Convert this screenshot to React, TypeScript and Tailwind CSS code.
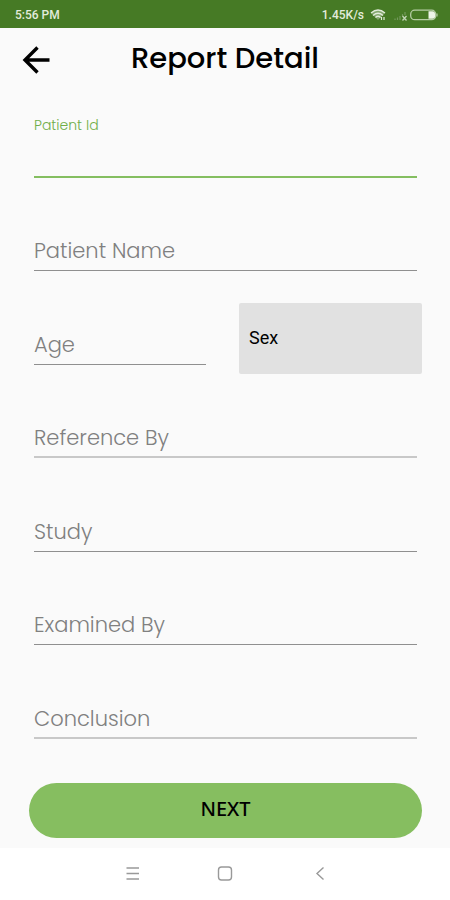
import React from "react";

interface FieldProps {
  id: string;
  label: string;
  lineClass?: string;
}

const Field = ({
  id,
  label,
  lineClass = "border-b border-[#8f8f8f]",
}: FieldProps) => {
  return (
    <div className="relative flex flex-col justify-end">
      <input
        id={id}
        type="text"
        placeholder=" "
        className={`peer h-10 w-full bg-transparent text-xl text-gray-800 outline-none ${lineClass}`}
      />
      <label
        htmlFor={id}
        className="pointer-events-none absolute bottom-1 left-0 text-[21px] leading-8 font-light text-[#808080] peer-focus:bottom-10 peer-focus:text-sm peer-focus:text-[#84be60] peer-[:not(:placeholder-shown)]:bottom-10 peer-[:not(:placeholder-shown)]:text-sm"
      >
        {label}
      </label>
    </div>
  );
};

const StatusBar = () => {
  return (
    <div className="flex h-7 items-center justify-between bg-[#467a25] pt-px pr-3 pl-[15px] font-[Roboto,sans-serif] text-xs font-medium text-[#e3ecdc]">
      <span>5:56 PM</span>
      <div className="flex items-center">
        <span>1.45K/s</span>
        <svg className="ml-[6px] h-3 w-4" viewBox="0 0 16 12" fill="none">
          <path
            d="M1 4Q8 -2 15 4L8 11Z"
            fill="#e3ecdc"
            fillOpacity="0.4"
          />
          <path
            d="M1 4Q8 -2 15 4M3 6.500Q8 2 13 6.500M5.500 8.500Q8 6 10.500 8.500"
            stroke="#e3ecdc"
            strokeWidth="1.300"
          />
          <path d="M11.500 8v3M14 8v3" stroke="#e3ecdc" strokeWidth="1.200" />
        </svg>
        <svg className="ml-[7px] h-3 w-4" viewBox="0 0 16 12" fill="none">
          <path
            d="M2 11v-1.500M4.500 11V8.500M7 11V7M9.500 7V5M12 6V3"
            stroke="#73995c"
            strokeWidth="1.200"
          />
          <path d="M9.500 7l4 4.500M13.500 7l-4 4.500" stroke="#c2d4b6" strokeWidth="1.300" />
        </svg>
        <svg className="ml-px h-3 w-7" viewBox="0 0 28 12" fill="none">
          <rect
            x="0.700"
            y="1.200"
            width="25"
            height="9.500"
            rx="4"
            stroke="#b5cda5"
            strokeWidth="1.300"
          />
          <path
            d="M18.500 2.200h4q2.500 0 2.500 2.500v2.500q0 2.500-2.500 2.500h-4z"
            fill="#eef5e9"
          />
          <path d="M27 4.500v3" stroke="#b5cda5" strokeWidth="1.200" />
        </svg>
      </div>
    </div>
  );
};

const Header = () => {
  return (
    <header className="grid h-14 grid-cols-[1fr_auto_1fr] items-center px-[22px] pt-1">
      <button type="button" aria-label="Back" className="mt-1 w-7">
        <svg viewBox="0 0 28 28" fill="none" className="h-7 w-7">
          <path
            d="M27.500 14H3M15.500 1.500L3 14l12.500 12.500"
            stroke="#000"
            strokeWidth="3.400"
          />
        </svg>
      </button>
      <h1 className="text-[29px] leading-9 font-medium text-black">
        Report Detail
      </h1>
    </header>
  );
};

const NavigationBar = () => {
  return (
    <nav className="flex h-[52px] items-center justify-center gap-[78px] bg-white">
      <button type="button" aria-label="Recent apps">
        <svg width="16" height="16" viewBox="0 0 16 16" fill="none">
          <path
            d="M3.500 2h12.500M3.500 7.500h12.500M3.500 13h12.500"
            stroke="#999"
            strokeWidth="1.400"
          />
        </svg>
      </button>
      <button type="button" aria-label="Home">
        <svg width="16" height="16" viewBox="0 0 16 16" fill="none">
          <rect
            x="1.500"
            y="1"
            width="13"
            height="13"
            rx="3"
            stroke="#999"
            strokeWidth="1.400"
          />
        </svg>
      </button>
      <button type="button" aria-label="Back to previous screen">
        <svg width="16" height="16" viewBox="0 0 16 16" fill="none">
          <path d="M12.500 1.500L6 7.500l6.500 6" stroke="#999" strokeWidth="1.400" />
        </svg>
      </button>
    </nav>
  );
};

const App = () => {
  return (
    <div className="flex min-h-screen flex-col bg-[#fafafa] font-[Poppins,Inter,sans-serif]">
      <StatusBar />
      <Header />
      <form
        className="flex flex-1 flex-col pr-7 pb-[10px] pl-[29px]"
        onSubmit={(e) => e.preventDefault()}
      >
        <div className="grid flex-1 auto-rows-fr px-[5px]">
          <div className="flex flex-col justify-end">
            <label
              htmlFor="patient-id"
              className="text-sm leading-5 font-light text-[#6fae48]"
            >
              Patient Id
            </label>
            <input
              id="patient-id"
              type="text"
              className="mt-[3px] h-10 w-full border-b-2 border-[#84be60] bg-transparent text-xl outline-none"
            />
          </div>
          <Field id="patient-name" label="Patient Name" />
          <div className="-mr-[5px] grid grid-cols-[172fr_183fr] gap-[33px]">
            <Field id="age" label="Age" />
            <select
              aria-label="Sex"
              defaultValue=""
              className="-mb-[9px] h-[71px] w-full appearance-none self-end rounded-xs bg-[#e1e1e1] px-[10px] font-[Roboto,sans-serif] text-lg text-black"
            >
              <option value="">Sex</option>
              <option value="male">Male</option>
              <option value="female">Female</option>
            </select>
          </div>
          <Field
            id="reference-by"
            label="Reference By"
            lineClass="border-b-2 border-[#c8c8c8]"
          />
          <Field id="study" label="Study" />
          <Field id="examined-by" label="Examined By" />
          <Field
            id="conclusion"
            label="Conclusion"
            lineClass="border-b-2 border-[#c8c8c8]"
          />
        </div>
        <button
          type="submit"
          className="mt-11 h-[55px] rounded-full bg-[#86be60] pb-1 font-['Noto_Sans',sans-serif] text-xl font-medium text-black"
        >
          NEXT
        </button>
      </form>
      <NavigationBar />
    </div>
  );
};

export default App;
